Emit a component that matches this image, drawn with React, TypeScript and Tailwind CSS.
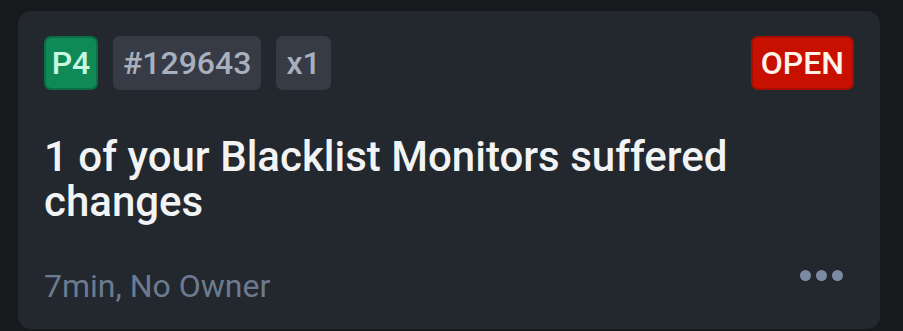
import React from "react";

export default function App() {
  return (
    <div className="w-[903px] h-[331px] bg-[#17191c] pt-[11px] pl-[18px] pr-[23px] pb-[2px]" style={{ fontFamily: "Roboto, 'Noto Sans', sans-serif" }}>
      <div className="h-[318px] rounded-[13px] bg-[#23272e] pt-[25px] px-[26px] flex flex-col">
        <div className="flex items-center justify-between">
          <div className="flex items-center gap-[15px]">
            <span className="h-[54px] w-[54px] flex items-center justify-center rounded-[7px] bg-[#0f8a57] border-2 border-[#0b6e45] text-[#c9f7e0] text-[32px] font-medium leading-none">P4</span>
            <span className="h-[54px] px-[10px] flex items-center rounded-[7px] bg-[#363b45] text-[#a9b0bd] text-[32px] font-medium leading-none">#129643</span>
            <span className="h-[54px] px-[10px] flex items-center rounded-[7px] bg-[#363b45] text-[#a9b0bd] text-[32px] font-medium leading-none">x1</span>
          </div>
          <span className="h-[54px] px-[8px] flex items-center rounded-[7px] bg-[#c81000] border-2 border-[#a80e00] text-[#fff3ea] text-[32px] font-medium leading-none">OPEN</span>
        </div>
        <div className="mt-[44px] text-[42px] leading-[45px] font-medium text-[#f1f3f5]">
          <div>1 of your Blacklist Monitors suffered</div>
          <div>changes</div>
        </div>
        <div className="mt-[42px] flex items-center justify-between">
          <span className="text-[32px] leading-[40px] text-[#6c7b8f]">7min, No Owner</span>
          <div className="flex items-center gap-[5px] mr-[11px] mt-[-22px]">
            <span className="w-[11px] h-[11px] rounded-full bg-[#7b8ba1]" />
            <span className="w-[11px] h-[11px] rounded-full bg-[#7b8ba1]" />
            <span className="w-[11px] h-[11px] rounded-full bg-[#7b8ba1]" />
          </div>
        </div>
      </div>
    </div>
  );
}
